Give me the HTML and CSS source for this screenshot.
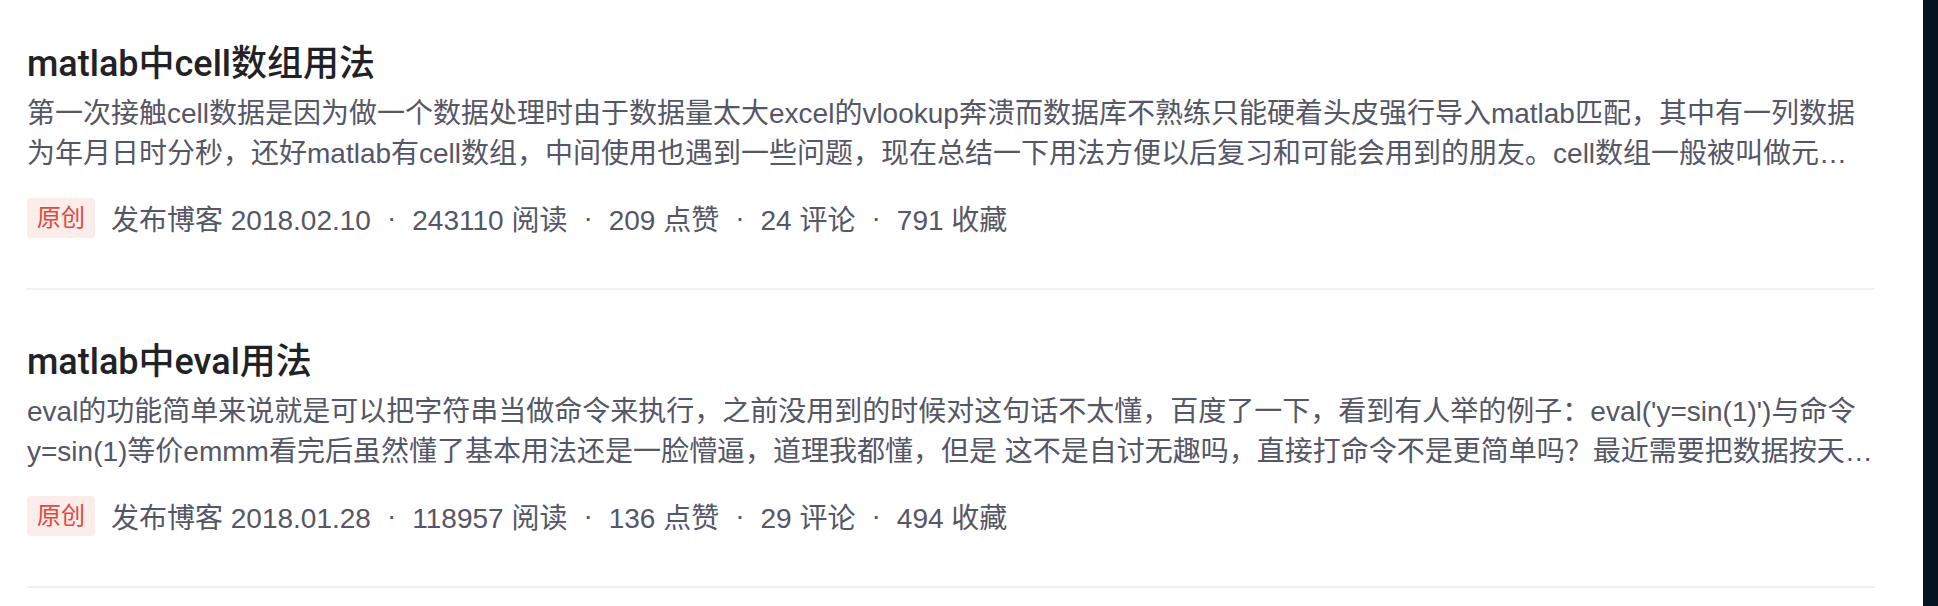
FILE: index.html
```html
<!DOCTYPE html>
<html lang="zh-CN">
<head>
    <meta charset="UTF-8">
    <meta name="viewport" content="width=device-width, initial-scale=1.0">
    <title>博客文章列表</title>
    <link rel="stylesheet" href="styles.css">
</head>
<body>
    <div class="page">
        <div class="content">
            <div class="article-list">
                <div class="article-item">
                    <h4 class="article-title">matlab中cell数组用法</h4>
                    <p class="article-desc">第一次接触cell数据是因为做一个数据处理时由于数据量太大excel的vlookup奔溃而数据库不熟练只能硬着头皮强行导入matlab匹配，其中有一列数据为年月日时分秒，还好matlab有cell数组，中间使用也遇到一些问题，现在总结一下用法方便以后复习和可能会用到的朋友。cell数组一般被叫做元胞数组，它的每个单元可以储存不同类型的数据，比如数字、字符串或者矩阵。</p>
                    <div class="article-info">
                        <span class="article-type">原创</span>
                        <span class="info-item">发布博客 2018.02.10</span>
                        <span class="dot">·</span>
                        <span class="info-item">243110 阅读</span>
                        <span class="dot">·</span>
                        <span class="info-item">209 点赞</span>
                        <span class="dot">·</span>
                        <span class="info-item">24 评论</span>
                        <span class="dot">·</span>
                        <span class="info-item">791 收藏</span>
                    </div>
                </div>

                <div class="article-item">
                    <h4 class="article-title">matlab中eval用法</h4>
                    <p class="article-desc">eval的功能简单来说就是可以把字符串当做命令来执行，之前没用到的时候对这句话不太懂，百度了一下，看到有人举的例子：eval('y=sin(1)')与命令y=sin(1)等价emmm看完后虽然懂了基本用法还是一脸懵逼，道理我都懂，但是 这不是自讨无趣吗，直接打命令不是更简单吗？最近需要把数据按天分开存储，变量名要随着日期变化，这时候eval就派上用场了。</p>
                    <div class="article-info">
                        <span class="article-type">原创</span>
                        <span class="info-item">发布博客 2018.01.28</span>
                        <span class="dot">·</span>
                        <span class="info-item">118957 阅读</span>
                        <span class="dot">·</span>
                        <span class="info-item">136 点赞</span>
                        <span class="dot">·</span>
                        <span class="info-item">29 评论</span>
                        <span class="dot">·</span>
                        <span class="info-item">494 收藏</span>
                    </div>
                </div>
            </div>
        </div>
        <div class="scrollbar"></div>
    </div>
</body>
</html>
```

FILE: styles.css
```css
body {
    margin: 0;
    font-family: 'Liberation Sans', 'Noto Sans CJK SC', sans-serif;
    background-color: #fff;
    overflow: hidden;
}
.page {
    display: flex;
    height: 100vh;
}
.content {
    flex: 1;
    padding: 0 48px 0 27px;
}
.scrollbar {
    width: 15px;
    background-color: #071321;
}
.article-item {
    padding: 48px 0 50px;
    border-bottom: 2px solid #f0f0f2;
}
.article-item:first-child {
    padding-top: 40px;
}
.article-title {
    margin: 0;
    font-family: Roboto, 'Noto Sans CJK SC', sans-serif;
    font-size: 36px;
    line-height: 48px;
    font-weight: 500;
    color: #222226;
}
.article-desc {
    margin: 6px 0 0;
    font-size: 28px;
    line-height: 40px;
    color: #555666;
    display: -webkit-box;
    -webkit-line-clamp: 2;
    -webkit-box-orient: vertical;
    overflow: hidden;
}
.article-info {
    margin-top: 24px;
    display: flex;
    align-items: center;
    height: 40px;
    font-size: 28px;
    color: #555666;
}
.article-type {
    font-size: 24px;
    line-height: 40px;
    padding: 0 10px;
    border-radius: 4px;
    color: #e0483d;
    background-color: #fcecea;
    margin-right: 16px;
}
.info-item {
    white-space: nowrap;
}
.dot {
    margin: 0 16px;
}
```
